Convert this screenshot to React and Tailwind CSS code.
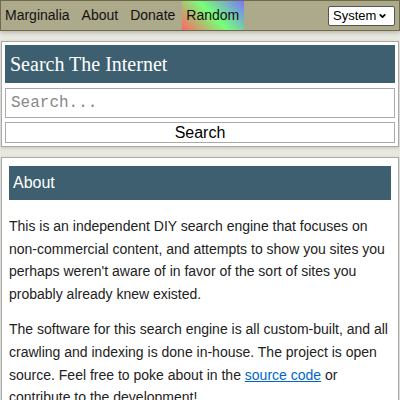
import { ChevronDown } from 'lucide-react';

export default function App() {
  return (
    <div className="min-h-[400px] bg-[#e8e8e0] font-['Liberation_Sans',Arial,sans-serif] text-[#222] overflow-hidden">
      <header className="relative z-10 flex h-[31px] items-stretch justify-between border border-[#6d6b4b] bg-[#acaa8a] text-[14px] text-[#111] shadow-[0_2px_4px_rgba(0,0,0,0.2)]">
        <nav className="flex items-stretch">
          <a className="flex items-center pl-[4px] pr-[6px]">Marginalia</a>
          <a className="flex items-center px-[6px]">About</a>
          <a className="flex items-center pl-[6px] pr-[7px]">Donate</a>
          <a className="flex items-center pl-[4px] pr-[5px] bg-[linear-gradient(45deg,#f66_0%,#7f7_50%,#77f_100%)]">Random</a>
        </nav>
        <div className="flex items-center pr-[4px]">
          <div className="relative">
            <select className="block h-[20px] w-[67px] appearance-none rounded-[2px] border border-[#555] bg-white pl-[4px] pr-[2px] text-[13px] leading-[18px] text-black outline-none" defaultValue="System">
              <option>System</option>
              <option>Light</option>
              <option>Dark</option>
            </select>
            <ChevronDown className="pointer-events-none absolute right-[8px] top-1/2 h-[9px] w-[9px] -translate-y-1/2 text-black" strokeWidth={4.5} />
          </div>
        </div>
      </header>

      <section className="mx-px mt-[10px] border border-[#aaa] bg-white p-[3px] shadow-[0_1px_3px_rgba(0,0,0,0.15)]">
        <h1 className="flex h-[38px] items-center bg-[#3e5f6f] px-[5px] font-['Liberation_Serif',serif] text-[20px] text-white">
          Search The Internet
        </h1>
        <input
          className="mt-[5px] block h-[30px] w-full border border-[#aaa] px-[5px] font-['Liberation_Mono',monospace] text-[16px] text-black placeholder:text-[#888] outline-none"
          placeholder="Search..."
        />
        <button className="mt-[4px] block h-[21px] w-full border border-[#aaa] bg-white text-[16px] leading-none text-black">
          Search
        </button>
      </section>

      <section className="mx-px mt-[10px] border border-[#aaa] bg-white px-[7px] pt-[8px] shadow-[0_1px_3px_rgba(0,0,0,0.15)]">
        <h2 className="flex h-[34px] items-center bg-[#3e5f6f] px-[4px] text-[16px] text-white">About</h2>
        <p className="mt-[15px] text-[14px] leading-[22.6px]">
          This is an independent DIY search engine that focuses on non-commercial content, and attempts to
          show you sites you perhaps weren't aware of in favor of the sort of sites you probably already knew existed.
        </p>
        <p className="mt-[13px] text-[14px] leading-[22.6px]">
          The software for this search engine is all custom-built, and all crawling and indexing is done in-house.
          The project is open source. Feel free to poke about in the{' '}
          <a className="text-[#0066cc] underline">source code</a> or contribute to the development!
        </p>
      </section>
    </div>
  );
}
